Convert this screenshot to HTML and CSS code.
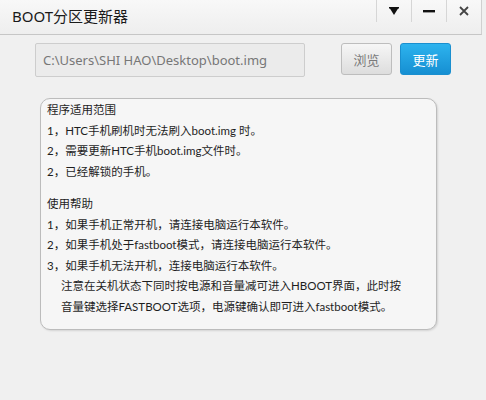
FILE: index.html
```html
<!DOCTYPE html>
<html lang="zh-CN">
<head>
  <meta charset="UTF-8">
  <meta name="viewport" content="width=device-width, initial-scale=1.0">
  <title>BOOT分区更新器</title>
  <link rel="stylesheet" href="styles.css">
</head>
<body>

<div class="titlebar">
  <div class="title">BOOT分区更新器</div>
  <div class="win-controls">
    <div class="win-btn">
      <svg width="10" height="8" viewBox="0 0 10 8"><polygon points="0,0 10,0 5,8" fill="#111"/><rect x="0" y="0" width="10" height="1.5" fill="#111"/></svg>
    </div>
    <div class="win-btn">
      <svg width="12" height="3" viewBox="0 0 12 3"><rect x="0" y="0" width="12" height="2.4" fill="#111"/></svg>
    </div>
    <div class="win-btn">
      <svg width="10" height="10" viewBox="0 0 10 10"><path d="M1 1 L9 9 M9 1 L1 9" stroke="#444" stroke-width="1.8"/></svg>
    </div>
  </div>
</div>

<div class="toolbar">
  <div class="path-input">C:\Users\SHI HAO\Desktop\boot.img</div>
  <button class="btn btn-browse">浏览</button>
  <button class="btn btn-update">更新</button>
</div>

<div class="panel">
  <p>程序适用范围</p>
  <p>1，HTC手机刷机时无法刷入boot.img 时。</p>
  <p>2，需要更新HTC手机boot.img文件时。</p>
  <p>2，已经解锁的手机。</p>
  <p class="section">使用帮助</p>
  <p>1，如果手机正常开机，请连接电脑运行本软件。</p>
  <p>2，如果手机处于fastboot模式，请连接电脑运行本软件。</p>
  <p>3，如果手机无法开机，连接电脑运行本软件。</p>
  <p class="indent">注意在关机状态下同时按电源和音量减可进入HBOOT界面，此时按</p>
  <p class="indent">音量键选择FASTBOOT选项，电源键确认即可进入fastboot模式。</p>
</div>

</body>
</html>
```

FILE: styles.css
```css
* {
  margin: 0;
  padding: 0;
  box-sizing: border-box;
}

body {
  background: #f0f0f0;
  font-family: 'Noto Sans', 'Noto Sans CJK SC', sans-serif;
  color: #222;
  width: 486px;
  height: 400px;
  overflow: hidden;
}

.titlebar {
  display: flex;
  height: 35px;
  width: 482px;
  background: linear-gradient(180deg, #f8f8f8 0%, #eeeeee 100%);
  border-bottom: 1px solid #c6c6c6;
  border-right: 1px solid #d0d0d0;
  padding-left: 12px;
}

.title {
  font-size: 15px;
  line-height: 32px;
  color: #1a1a1a;
}

.win-controls {
  display: flex;
  margin-left: auto;
  height: 22px;
}

.win-btn {
  width: 35px;
  height: 22px;
  border-left: 1px solid #d6d6d6;
  display: flex;
  align-items: center;
  justify-content: center;
}

.toolbar {
  display: flex;
  align-items: flex-start;
  padding: 8px 0 0 35px;
}

.path-input {
  width: 270px;
  height: 34px;
  border: 1px solid #cdcdcd;
  border-radius: 2px;
  background: #ebebeb;
  color: #777;
  font-size: 13px;
  line-height: 32px;
  padding-left: 7px;
}

.btn {
  width: 51px;
  height: 32px;
  border-radius: 3px;
  font-family: 'Noto Sans CJK SC', sans-serif;
  font-size: 13px;
}

.btn-browse {
  margin-left: 36px;
  border: 1px solid #bdbdbd;
  background: linear-gradient(180deg, #f6f6f6 0%, #dddddd 100%);
  color: #7a7a7a;
}

.btn-update {
  margin-left: 8px;
  border: 1px solid #1a8fcf;
  background: linear-gradient(180deg, #2db3ee 0%, #168fd2 100%);
  color: #fff;
}

.panel {
  margin: 21px 0 0 40px;
  width: 397px;
  height: 232px;
  border: 1px solid #bcbcbc;
  border-radius: 10px;
  background: #f6f6f6;
  box-shadow: 1px 1px 2px rgba(0, 0, 0, 0.12);
  padding: 1px 0 0 6px;
  font-family: 'Lato', 'Noto Sans CJK SC', sans-serif;
  font-size: 11.5px;
  line-height: 20.5px;
  color: #1e1e1e;
}

.panel .section {
  margin-top: 12px;
}

.panel .indent {
  padding-left: 14px;
}
```
